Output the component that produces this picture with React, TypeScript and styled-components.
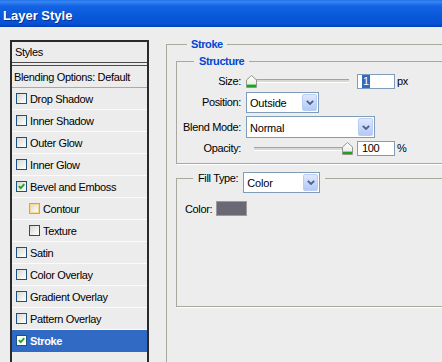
import React from 'react';
import styled, { createGlobalStyle } from 'styled-components';

const Global = createGlobalStyle`
  html, body { margin: 0; padding: 0; background: #ededed; }
  body { font-family: "Liberation Sans", Arial, sans-serif; font-size: 11px; color: #000; }
  #root { width: 442px; height: 362px; overflow: hidden; }
`;

const Window = styled.div`
  width: 442px;
  height: 362px;
  overflow: hidden;
  background: #ededed;
  display: flex;
  flex-direction: column;
`;

const TitleBar = styled.div`
  flex: none;
  height: 27px;
  box-sizing: border-box;
  padding: 3px 0 0 3px;
  display: flex;
  align-items: center;
  background: linear-gradient(to bottom, #1f6fe6 0%, #3a86f2 6%, #1463e4 22%, #0a58da 60%, #0652d6 88%, #0440b8 100%);
  color: #fff;
  font: bold 13px/15px "Liberation Sans", Arial, sans-serif;
  text-shadow: 1px 1px 0 #0b2f8c;
`;

const Body = styled.div`
  display: flex;
  align-items: flex-start;
  gap: 17px;
  padding: 11px 0 0 10px;
`;

/* ---------- Styles list ---------- */

const List = styled.div`
  flex: none;
  width: 139px;
  min-height: 340px;
  margin-top: 2px;
  box-sizing: border-box;
  border: 2px solid #2a2a2a;
  border-bottom: none;
  background: #ececec;
  letter-spacing: -0.35px;
`;

const HeaderRow = styled.div`
  height: 20px;
  display: flex;
  align-items: center;
  padding-left: 3px;
  border-bottom: 1px solid #4a4a4a;
`;

const BlendRow = styled.div`
  height: 21px;
  margin-top: 2px;
  display: flex;
  align-items: center;
  padding-left: 2px;
  border-top: 1px solid #4a4a4a;
  border-bottom: 1px solid #a9a9a9;
`;

const EffectRow = styled.div<{ $indent?: boolean; $selected?: boolean }>`
  height: 21px;
  display: flex;
  align-items: center;
  gap: 3px;
  padding-left: ${p => (p.$indent ? 17 : 4)}px;
  border-bottom: 1px solid ${p => (p.$selected ? '#316ac5' : '#fbfbfb')};
  background: ${p => (p.$selected ? '#316ac5' : 'transparent')};
  color: ${p => (p.$selected ? '#fff' : '#000')};
  font-weight: ${p => (p.$selected ? 'bold' : 'normal')};
  white-space: nowrap;
`;

const Box = styled.span<{ $hot?: boolean; $plain?: boolean }>`
  flex: none;
  width: 11px;
  height: 11px;
  box-sizing: border-box;
  display: flex;
  align-items: center;
  justify-content: center;
  border: 1px solid ${p => (p.$hot ? '#e0a232' : '#1c5180')};
  background: ${p => (p.$plain ? '#fff' : 'linear-gradient(135deg, #d8d8d2 0%, #f4f4f1 70%, #fff 100%)')};
  box-shadow: ${p => (p.$hot ? 'inset 0 0 0 1px #fcd98a' : 'none')};
`;

const Check = () => (
  <svg width="7" height="7" viewBox="0 0 7 7">
    <path d="M0.8 3.2 L2.7 5.2 L6.3 1.2" fill="none" stroke="#21a121" strokeWidth="1.8" />
  </svg>
);

type Effect = { name: string; checked?: boolean; indent?: boolean; hot?: boolean; selected?: boolean };

const effects: Effect[] = [
  { name: 'Drop Shadow' },
  { name: 'Inner Shadow' },
  { name: 'Outer Glow' },
  { name: 'Inner Glow' },
  { name: 'Bevel and Emboss', checked: true },
  { name: 'Contour', indent: true, hot: true },
  { name: 'Texture', indent: true },
  { name: 'Satin' },
  { name: 'Color Overlay' },
  { name: 'Gradient Overlay' },
  { name: 'Pattern Overlay' },
  { name: 'Stroke', checked: true, selected: true },
];

/* ---------- Group boxes ---------- */

const Group = styled.fieldset<{ $pad: string }>`
  margin: 0;
  min-width: 0;
  padding: ${p => p.$pad};
  border: 1px solid #a9a89d;
  box-shadow: 1px 1px 0 #fff;
`;

const OuterGroup = styled(Group)`
  flex: none;
  width: 300px;
  box-sizing: border-box;
`;

const FillGroup = styled(Group)`
  margin-top: 8px;
`;

const Legend = styled.legend<{ $ml: number; $pad: number }>`
  margin-left: ${p => p.$ml}px;
  padding: 0 ${p => p.$pad}px;
  line-height: 13px;
  font-weight: bold;
  color: #0046d5;
  letter-spacing: -0.4px;
`;

const ControlLegend = styled.legend`
  margin-left: 8px;
  padding: 0 5px;
  display: flex;
  align-items: flex-start;
  gap: 5px;
  line-height: 13px;
  letter-spacing: -0.35px;
`;

const FormGrid = styled.div`
  display: grid;
  grid-template-columns: 56px auto;
  grid-template-rows: 16px 21px 22px 15px;
  column-gap: 5px;
  row-gap: 3px;
  align-items: center;
  letter-spacing: -0.35px;
`;

const Label = styled.span`
  justify-self: end;
  white-space: nowrap;
  line-height: 13px;
`;

const Line = styled.div`
  display: flex;
  align-items: center;
`;

const SliderWrap = styled.div`
  position: relative;
  width: 107px;
  height: 13px;
  display: flex;
  align-items: center;
  margin-right: 4px;
`;

const Track = styled.div`
  flex: 1;
  margin: 0 4px 0 8px;
  height: 2px;
  background: #d9d9d4;
  border-top: 1px solid #a4a49c;
  border-bottom: 1px solid #fff;
`;

const Thumb = styled.svg`
  position: absolute;
  top: 0;
`;

const Slider = ({ pct }: { pct: number }) => (
  <SliderWrap>
    <Track />
    <Thumb width="11" height="13" viewBox="0 0 11 13" style={{ left: `${pct * 96}px` }}>
      <defs>
        <linearGradient id="tg" x1="0" y1="0" x2="0" y2="1">
          <stop offset="0" stopColor="#ffffff" />
          <stop offset="1" stopColor="#e6e6df" />
        </linearGradient>
      </defs>
      <path d="M0.5 5 L5.5 0.5 L10.5 5 L10.5 12.5 L0.5 12.5 Z" fill="url(#tg)" stroke="#8f9a8c" />
      <rect x="1" y="10" width="9" height="2" fill="#21a121" />
      <rect x="1" y="9" width="9" height="1" fill="#8fd88f" />
    </Thumb>
  </SliderWrap>
);

const Input = styled.div`
  width: 38px;
  height: 15px;
  box-sizing: border-box;
  border: 1px solid #7f9db9;
  background: #fff;
  display: flex;
  align-items: center;
  padding-left: 4px;
  line-height: 13px;
  margin-right: 2px;
`;

const Selected = styled.span`
  background: #316ac5;
  color: #fff;
  padding: 0 1px;
`;

const SelectBox = styled.div<{ $w: number; $h: number }>`
  width: ${p => p.$w}px;
  height: ${p => p.$h}px;
  box-sizing: border-box;
  border: 1px solid #7f9db9;
  background: #fff;
  display: flex;
  align-items: stretch;
  color: #000;
  font-weight: normal;
  letter-spacing: -0.2px;
`;

const SelectText = styled.span`
  flex: 1;
  display: flex;
  align-items: center;
  padding-left: 3px;
  padding-top: 1px;
`;

const DropButton = styled.span`
  flex: none;
  width: 15px;
  margin: 1px;
  box-sizing: border-box;
  border: 1px solid #bacdf5;
  border-radius: 2px;
  background: linear-gradient(to bottom, #dfe8fd 0%, #c8d8fc 50%, #b5c9f7 100%);
  display: flex;
  align-items: center;
  justify-content: center;
`;

const Select = ({ value, w, h, mb }: { value: string; w: number; h: number; mb?: number }) => (
  <SelectBox $w={w} $h={h} style={mb ? { marginBottom: mb } : undefined}>
    <SelectText>{value}</SelectText>
    <DropButton>
      <svg width="8" height="5" viewBox="0 0 8 5">
        <path d="M0.8 0.8 L4 4 L7.2 0.8" fill="none" stroke="#4d6185" strokeWidth="1.8" />
      </svg>
    </DropButton>
  </SelectBox>
);

const Unit = styled.span`
  line-height: 13px;
`;

const ColorRow = styled.div`
  display: flex;
  align-items: center;
  gap: 4px;
  letter-spacing: -0.35px;
`;

const Swatch = styled.span<{ $c: string }>`
  width: 31px;
  height: 15px;
  box-sizing: border-box;
  border: 1px solid #9c9c9c;
  background: ${p => p.$c};
`;

export default function App() {
  return (
    <Window>
      <Global />
      <TitleBar>Layer Style</TitleBar>
      <Body>
        <List>
          <HeaderRow>Styles</HeaderRow>
          <BlendRow>Blending Options: Default</BlendRow>
          {effects.map(e => (
            <EffectRow key={e.name} $indent={e.indent} $selected={e.selected}>
              <Box $hot={e.hot} $plain={e.selected}>{e.checked && <Check />}</Box>
              {e.name}
            </EffectRow>
          ))}
        </List>

        <OuterGroup $pad="4px 0 80px 9px">
          <Legend $ml={11} $pad={4}>Stroke</Legend>
          <Group $pad="5px 0 7px 8px">
            <Legend $ml={9} $pad={5}>Structure</Legend>
            <FormGrid>
              <Label>Size:</Label>
              <Line>
                <Slider pct={0} />
                <Input><Selected>1</Selected></Input>
                <Unit>px</Unit>
              </Line>
              <Label>Position:</Label>
              <Select value="Outside" w={73} h={21} />
              <Label>Blend Mode:</Label>
              <Select value="Normal" w={129} h={22} />
              <Label>Opacity:</Label>
              <Line>
                <Slider pct={1} />
                <Input>100</Input>
                <Unit>%</Unit>
              </Line>
            </FormGrid>
          </Group>
          <FillGroup $pad="16px 0 90px 8px">
            <ControlLegend>
              <Unit>Fill Type:</Unit>
              <Select value="Color" w={77} h={21} mb={-8} />
            </ControlLegend>
            <ColorRow>
              <span>Color:</span>
              <Swatch $c="#6a6875" />
            </ColorRow>
          </FillGroup>
        </OuterGroup>
      </Body>
    </Window>
  );
}
